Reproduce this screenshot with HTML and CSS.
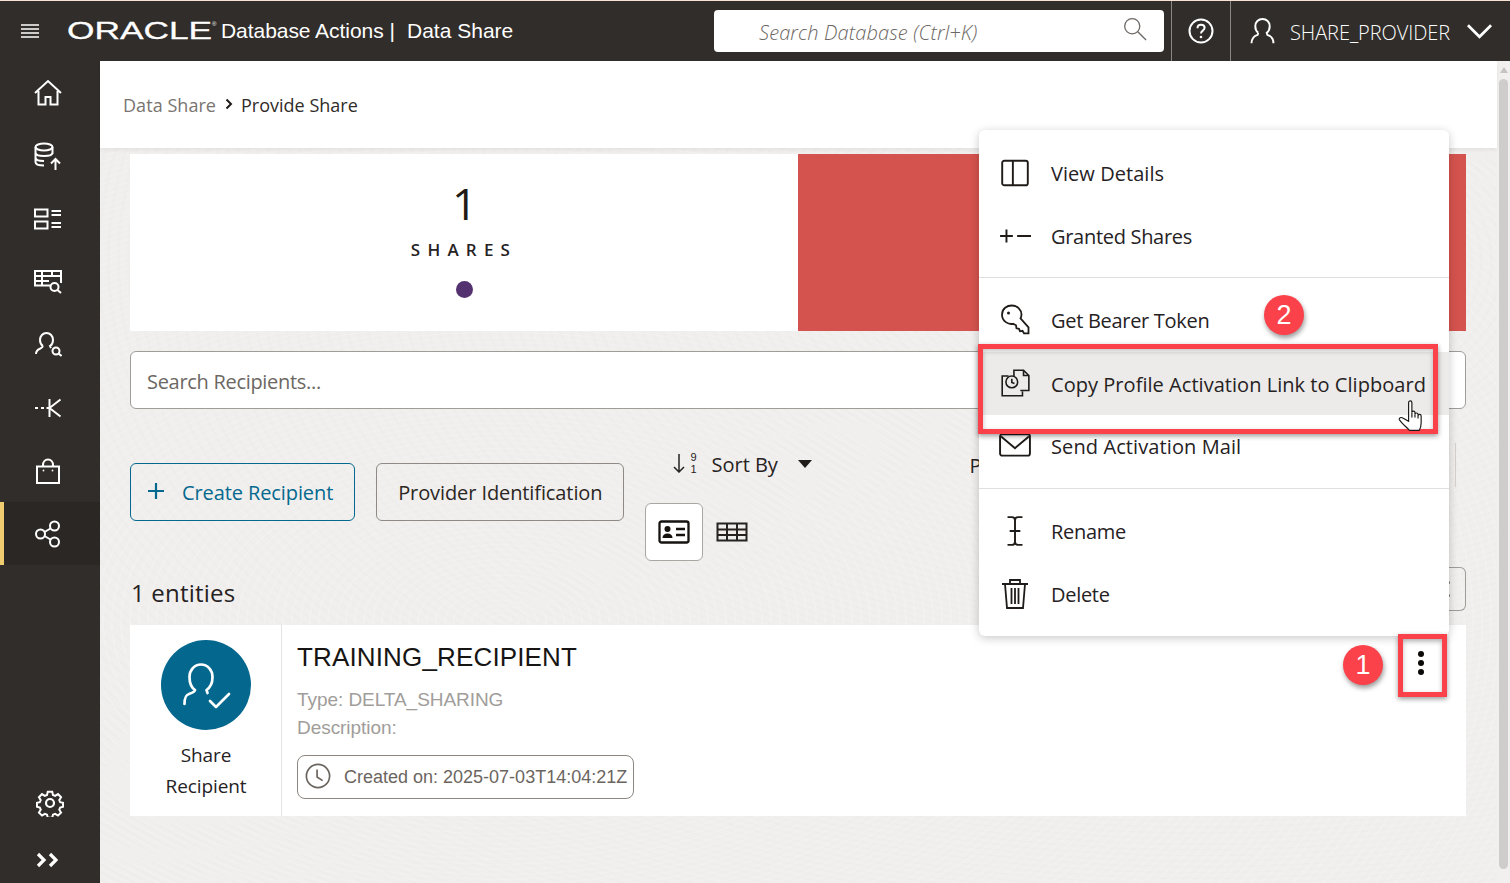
FILE: index.html
```html
<!DOCTYPE html>
<html lang="en">
<head>
<meta charset="utf-8">
<title>Data Share - Provide Share</title>
<link rel="stylesheet" href="styles.css">
</head>
<body>
<header class="topbar">
  <svg class="burger" viewBox="0 0 20 16"><path d="M1 2h18M1 6h18M1 10h18M1 14h18"/></svg>
  <div class="logo"><span class="logo-word">ORACLE</span><span class="logo-reg">®</span></div>
  <span class="app-name">Database Actions |</span>
  <span class="app-page">Data Share</span>
  <div class="global-search">
    <span class="global-placeholder">Search Database (Ctrl+K)</span>
    <svg class="global-glass" viewBox="0 0 26 26"><circle cx="10" cy="10" r="8.2"/><path d="M16 16l9 9"/></svg>
  </div>
  <div class="help-cell"><svg class="help-icon" viewBox="0 0 26 26"><circle cx="13" cy="13" r="11.5"/><path d="M9.5 10.2c0-2.2 1.6-3.4 3.6-3.4s3.5 1.2 3.5 3c0 2.800-3.600 2.800-3.600 5.600"/><circle class="solid" cx="13" cy="19" r="1.300"/></svg></div>
  <div class="user-cell">
    <svg class="user-icon" viewBox="0 0 26 28"><path d="M8.600 15.800C6.500 14.300 5.500 11.700 5.500 9c0-4.400 3.200-7.500 7.500-7.500s7.500 3.100 7.500 7.500c0 2.700-1 5.300-3.100 6.800l.6 2.200c3.500 1 6.400 3 6.400 8.800M8.600 15.800L8 18c-3.500 1-6.400 3-6.400 8.800"/></svg>
    <span class="user-name">SHARE_PROVIDER</span>
    <svg class="user-chevron" viewBox="0 0 28 16"><path d="M2 2l12 12L26 2"/></svg>
  </div>
</header>

<div class="shell">
  <nav class="sidebar">
    <a class="nav-item"><svg viewBox="0 0 28 28"><path d="M1 14L14 2l13 12M4.500 12v13.500h7V18h5v7.500h7V12"/></svg></a>
    <a class="nav-item"><svg viewBox="0 0 28 28"><ellipse cx="10" cy="5" rx="8.500" ry="3.500"/><path d="M1.500 5v15c0 2 3 3.500 8.500 3.500M18.500 5v7M1.500 10.500c0 2 3 3.500 8.500 3.500s8.500-1.500 8.500-3.500M1.500 15.500c0 2 3 3.500 8.500 3.500"/><path d="M21.500 28V17M17 21.500l4.500-4.500 4.500 4.500"/></svg></a>
    <a class="nav-item"><svg viewBox="0 0 28 22"><path d="M1 1.500h12.500v7H1zM1 13.500h12.500v7H1zM17.500 3H27M17.500 7H27M17.500 15H27M17.500 19H27"/></svg></a>
    <a class="nav-item"><svg viewBox="0 0 28 24"><path d="M16 15.500H1V1h26v12M1 6h26M1 11h14M8 1v14.500M18 1v5"/><circle cx="20.500" cy="17" r="4"/><path d="M23.500 20l3.500 3"/></svg></a>
    <a class="nav-item"><svg viewBox="0 0 28 28"><path d="M9 15c-2-1.200-3-3.500-3-6 0-4 2.800-7 6.500-7s6.500 3 6.500 7c0 2.500-1 4.800-3 6l1 2M9 15c-.5 1.500-1.500 2-3 2.800-2.500 1-4 2.500-4 5.200"/><circle cx="22" cy="20" r="3.500"/><path d="M24.500 22.500l3 2.500"/></svg></a>
    <a class="nav-item"><svg viewBox="0 0 28 20"><path d="M1 10h3M7 10h3M12.500 10h2.500M15.500 1v18M15.500 10L26.500 1.500M15.500 10l11 8.500"/></svg></a>
    <a class="nav-item"><svg viewBox="0 0 28 28"><path d="M3 9.500h22v16.500H3zM9 9V8c0-3 2-5.500 5-5.500S19 5 19 8v1"/><circle class="solid" cx="9.500" cy="13.500" r=".9"/><circle class="solid" cx="18.500" cy="13.500" r=".9"/></svg></a>
    <a class="nav-item nav-active"><svg viewBox="0 0 28 28"><circle cx="6.500" cy="14" r="4.500"/><circle cx="20.500" cy="6" r="4.500"/><circle cx="20.500" cy="22" r="4.500"/><path d="M10.500 12l6-3.500M10.500 16l6 3.500"/></svg></a>
    <a class="nav-item nav-gear"><svg viewBox="0 0 28 28"><circle cx="14" cy="14" r="4"/><path d="M11.500 1.500h5l.8 3.600 2.400 1 3.200-2 3.400 3.500-2 3.200 1 2.200 3.200.8v4.400l-3.200.8-1 2.400 2 3.200-3.400 3.400-3.200-2-2.400 1-.8 3.400h-5l-.8-3.400-2.400-1-3.200 2-3.400-3.400 2-3.200-1-2.400-3.200-.8v-4.400l3.200-.8 1-2.200-2-3.200 3.400-3.500 3.200 2 2.400-1z" transform="translate(1.400 1.400) scale(.9)"/></svg></a>
    <a class="nav-item nav-expand"><svg viewBox="0 0 22 16"><path d="M2 2l6 6-6 6M14 2l6 6-6 6"/></svg></a>
  </nav>

  <main class="main">
    <div class="crumbs">
      <span class="crumb-root">Data Share</span>
      <svg class="crumb-sep" viewBox="0 0 8 12"><path d="M1.500 1.500L6 6l-4.500 4.500"/></svg>
      <span class="crumb-page">Provide Share</span>
    </div>

    <div class="content">
      <section class="stats">
        <div class="stat-card">
          <div class="stat-number">1</div>
          <div class="stat-label">SHARES</div>
          <div class="stat-dot"></div>
        </div>
        <div class="stat-red"></div>
      </section>

      <div class="recipient-search">Search Recipients...</div>

      <div class="toolbar">
        <div class="actions">
          <button class="btn btn-primary"><svg class="plus" viewBox="0 0 18 18"><path d="M9 1v16M1 9h16"/></svg>Create Recipient</button>
          <button class="btn">Provider Identification</button>
        </div>
        <div class="sort-col">
          <div class="sort-row">
            <svg class="sort-arrow" viewBox="0 0 12 20"><path d="M6 1v18M1 14l5 5 5-5"/></svg>
            <span class="sort-digits"><span>9</span><span>1</span></span>
            <span class="sort-text">Sort By</span>
            <span class="caret"></span>
          </div>
          <div class="view-row">
            <span class="view-btn"><svg class="card-icon" viewBox="0 0 32 24"><rect x="1.500" y="1.500" width="29" height="21" rx="2"/><circle class="solid" cx="9.500" cy="9" r="3"/><path class="solid" d="M4.500 18c0-3 2-4.500 5-4.500s5 1.500 5 4.500z"/><path d="M18 9h9M18 15h9"/></svg></span>
            <svg class="table-icon" viewBox="0 0 32 20"><path d="M1.500 1.500h29v17h-29zM1.500 7.500h29M1.500 13h29M11 1.500v17M21 1.500v17"/></svg>
          </div>
        </div>
        <div class="filter-label">P</div>
        <div class="filter-box"></div>
      </div>

      <div class="entities-row">
        <span class="entities-count">1 entities</span>
        <span class="entities-btn"><i></i><i></i></span>
      </div>

      <article class="recipient">
        <div class="recipient-side">
          <div class="avatar"><svg viewBox="0 0 50 50"><path d="M14 30C9.500 27 8.500 22 8.500 17 8.500 10 13.500 4.500 20 4.500S31.500 10 31.500 17c0 5-1.500 10-6 13l1 3M14 30c-.5 2-3 3-6 4-3 1-4.500 3-4.500 10"/><path d="M29 41l6 6 13-13"/></svg></div>
          <div class="avatar-label">Share<br>Recipient</div>
        </div>
        <div class="recipient-body">
          <h2 class="recipient-name">TRAINING_RECIPIENT</h2>
          <div class="recipient-meta">Type: DELTA_SHARING</div>
          <div class="recipient-meta">Description:</div>
          <div class="created"><svg viewBox="0 0 28 28"><circle cx="14" cy="14" r="12.500"/><path d="M13 7v8l6 4"/></svg>Created on: 2025-07-03T14:04:21Z</div>
        </div>
        <div class="kebab"><i></i><i></i><i></i></div>
      </article>
    </div>
  </main>

  <div class="scrollbar"><span class="scroll-up"></span><span class="scroll-thumb"></span></div>
</div>

<div class="menu">
  <ul class="menu-group">
    <li class="menu-item menu-item-view"><span class="menu-icon"><svg viewBox="0 0 30 30"><rect x="3" y="3.500" width="24" height="23" rx="2"/><path d="M13 3.500v23"/></svg></span>View Details</li>
    <li class="menu-item"><span class="menu-icon"><svg viewBox="0 0 30 30"><path d="M1 15h12M7 9v12M17 15h13"/></svg></span>Granted Shares</li>
  </ul>
  <ul class="menu-group">
    <li class="menu-item"><span class="menu-icon"><svg viewBox="0 0 30 32"><path d="M12 1.500c5.500 0 9.500 4.500 9.500 9 0 1.500-.5 2.800-1 3.800l8 9v6h-4.500l-1.500-2.500-2.500.5-1-2.500-2.500-.5-.5-3-3-1.500c-4.500 1-11-2.500-11-9S7 1.500 12 1.500z"/><circle class="solid" cx="8.500" cy="9" r="1.500"/></svg></span>Get Bearer Token</li>
    <li class="menu-item menu-hover"><span class="menu-icon"><svg class="copy-icon" viewBox="0 0 30 30"><path d="M9 8.500H3V27h19v-4M14 9V3h9l5 5v14h-8M23 3v5h5"/><circle cx="12" cy="14" r="5.500"/><path d="M12 11v3.500l2.500 1"/></svg></span>Copy Profile Activation Link to Clipboard</li>
    <li class="menu-item menu-item-send"><span class="menu-icon"><svg viewBox="0 0 30 24"><rect x="1" y="1" width="28" height="20" rx="2"/><path d="M2 3l13 11L28 3"/></svg></span>Send Activation Mail</li>
  </ul>
  <ul class="menu-group">
    <li class="menu-item"><span class="menu-icon"><svg viewBox="0 0 20 30"><path d="M3 2h4c2 0 3 1 3 3v20c0 2-1 3-3 3H3M17 2h-4c-2 0-3 1-3 3M17 28h-4c-2 0-3-1-3-3M5 15h10"/></svg></span>Rename</li>
    <li class="menu-item"><span class="menu-icon"><svg viewBox="0 0 30 32"><path d="M2 6h26M10 6V2h10v4M5 6l2 24h16l2-24M11.500 10v16M15 10v16M18.500 10v16"/></svg></span>Delete</li>
  </ul>
</div>

<div class="mark mark-box-one"></div>
<div class="mark mark-box-two"></div>
<div class="mark-num mark-num-one">1</div>
<div class="mark-num mark-num-two">2</div>
<svg class="hand" viewBox="0 0 28 34"><path d="M11 21V3.500a1.700 1.700 0 0 1 3.400 0V14a1.600 1.600 0 0 1 3.200 0v2a1.600 1.600 0 0 1 3.200 0v1.500a1.600 1.600 0 0 1 3.200 0V25c0 3-1 5.500-2 7.500H12C9 29 5 26.500 1.500 21.500c-1-2 2-3 3.500-2l6 3.500z"/><path d="M14.400 14v5M17.600 16v3M20.800 17.500V20"/></svg>
</body>
</html>
```
FILE: styles.css
```css
* { box-sizing: border-box; }
html, body { margin: 0; height: 100%; overflow: hidden; }
body {
  width: 1510px;
  height: 883px;
  position: relative;
  font-family: "Open Sans", "Noto Sans", sans-serif;
  color: #26221f;
  background: #f1efed;
  display: flex;
  flex-direction: column;
}
svg { display: block; fill: none; stroke: currentColor; }
svg .solid { fill: currentColor; stroke: none; }
i { display: block; }

/* top bar */
.topbar {
  flex: 0 0 61px;
  display: flex;
  align-items: center;
  background: #312d2a;
  border-top: 1px solid #f6e3d6;
  color: #fff;
  padding-left: 20px;
}
.burger { width: 20px; height: 16px; stroke-width: 1.300; margin-right: 27px; }
.logo { width: 154px; display: flex; align-items: flex-start; flex: none; height: 24px; position: relative; }
.logo-word {
  font: 400 24px/24px "Liberation Sans", sans-serif;
  -webkit-text-stroke: .3px #fff;
  display: inline-block;
  transform: scaleX(1.47);
  transform-origin: left center;
  width: 103px;
  flex: none;
}
.logo-reg { font: 400 6px/8px "Liberation Sans", sans-serif; margin-left: 42px; margin-top: 1px; }
.app-name { font: 400 21px/24px "Liberation Sans", sans-serif; letter-spacing: -.05px; width: 186px; flex: none; }
.app-page { font: 400 21px/24px "Liberation Sans", sans-serif; }
.global-search {
  margin-left: auto;
  width: 450px;
  height: 42px;
  background: #fff;
  border-radius: 4px;
  display: flex;
  align-items: center;
  justify-content: space-between;
  padding: 0 17px 0 45px;
  color: #6c6763;
}
.global-placeholder { font-size: 20px; font-style: italic; font-weight: 300; letter-spacing: .12px; margin-top: 2px; }
.global-glass { width: 24px; height: 24px; stroke-width: 1.400; margin-top: -4px; }
.help-cell {
  margin-left: 7px;
  width: 60px;
  height: 60px;
  border-left: 1px solid #8b8784;
  border-right: 1px solid #8b8784;
  display: flex;
  align-items: center;
  justify-content: center;
}
.help-icon { width: 26px; height: 26px; stroke-width: 2; }
.user-cell { width: 279px; display: flex; align-items: center; padding-left: 19px; }
.user-icon { width: 25px; height: 28px; stroke-width: 2; }
.user-name { margin: 2px 0 0 15px; font-size: 20px; font-weight: 300; letter-spacing: -.07px; width: 177px; flex: none; }
.user-chevron { width: 27px; height: 16px; stroke-width: 2.800; margin-left: -1px; }

/* frame */
.shell { flex: 1; display: flex; min-height: 0; }
.sidebar {
  flex: 0 0 100px;
  display: flex;
  flex-direction: column;
  background: #312d2a;
  color: #fff;
}
.nav-item { flex: 0 0 63px; display: flex; align-items: center; padding-left: 34px; }
.nav-item svg { width: 28px; height: 28px; stroke-width: 2; }
.nav-active { background: #2a2725; border-left: 4px solid #f0cc71; padding-left: 30px; }
.nav-gear { margin-top: auto; flex-basis: 56px; padding-left: 36px; }
.nav-gear svg { stroke-width: 2.200; }
.nav-expand { flex-basis: 46px; margin-top: 6px; padding-left: 36px; }
.nav-expand svg { width: 22px; height: 16px; stroke-width: 3.200; }

/* main */
.main {
  flex: 1;
  min-width: 0;
  display: flex;
  flex-direction: column;
  background-color: #f1efed;
  background-image:
    repeating-radial-gradient(ellipse at 400px 560px, rgba(255,255,255,.14) 0 2px, transparent 2px 9px),
    repeating-radial-gradient(ellipse at 1100px 200px, rgba(120,110,100,.014) 0 3px, transparent 3px 10px);
}
.crumbs {
  flex: 0 0 87px;
  background: #fff;
  display: flex;
  align-items: center;
  padding: 1px 0 0 23px;
  font-size: 18px;
  box-shadow: 0 2px 4px rgba(0,0,0,.06);
  position: relative;
}
.crumb-root { color: #79746f; letter-spacing: .05px; }
.crumb-sep { width: 8px; height: 12px; stroke-width: 2; margin: 0 8px 3px 9px; color: #1f1b18; }
.crumb-page { color: #302c29; }
.content { padding: 6px 31px 0 30px; display: flex; flex-direction: column; }

.stats { display: flex; height: 177px; }
.stat-card {
  flex: 0 0 668px;
  background: #fff;
  display: flex;
  flex-direction: column;
  align-items: center;
  padding-top: 21px;
}
.stat-number { font-size: 44px; line-height: 56px; font-weight: 400; color: #1f1b18; padding-left: 1px; }
.stat-label { font-size: 17px; line-height: 23px; font-weight: 600; letter-spacing: 7.200px; margin-top: 7px; }
.stat-dot { width: 17px; height: 17px; border-radius: 50%; background: #54316f; margin-top: 20px; }
.stat-red { flex: 1; background: #d5534e; }

.recipient-search {
  margin-top: 20px;
  height: 58px;
  background: #fff;
  border: 1px solid #a09c98;
  border-radius: 6px;
  display: flex;
  align-items: center;
  padding: 2px 0 0 16px;
  font-size: 20px;
  color: #6c6763;
  letter-spacing: -.3px;
}

.toolbar { display: flex; margin-top: 34px; height: 118px; }
.actions { display: flex; align-items: flex-start; gap: 21px; padding-top: 20px; }
.btn {
  height: 58px;
  padding: 0 21px;
  display: flex;
  align-items: center;
  background: transparent;
  border: 1px solid #8f8a85;
  border-radius: 6px;
  font: 400 20px "Open Sans", "Noto Sans", sans-serif;
  letter-spacing: -.1px;
  color: #2b2724;
}
.btn-primary { border-color: #04698f; color: #04698f; padding: 0 21px 0 16px; }
.plus { width: 18px; height: 18px; stroke-width: 2.200; margin-right: 17px; margin-top: -3px; }
.sort-col { width: 324px; margin-left: 21px; display: flex; flex-direction: column; }
.sort-row { height: 60px; display: flex; align-items: flex-start; padding: 10px 0 0 28px; }
.sort-arrow { width: 12px; height: 20px; stroke-width: 1.500; }
.sort-digits { display: flex; flex-direction: column; font: 400 11px/12px "Liberation Sans", sans-serif; margin: -2px 0 0 5px; width: 7px; }
.sort-text { margin-left: 14px; font-size: 20px; line-height: 24px; }
.caret { width: 0; height: 0; margin: 7px 0 0 20px; border-left: 7.500px solid transparent; border-right: 7.500px solid transparent; border-top: 8px solid #1f1b18; }
.view-row { display: flex; align-items: center; }
.view-btn { width: 58px; height: 58px; background: #fff; border: 1px solid #aaa6a2; border-radius: 6px; display: flex; align-items: center; justify-content: center; }
.card-icon { width: 32px; height: 24px; stroke-width: 2.300; color: #151210; }
.table-icon { width: 32px; height: 20px; stroke-width: 2; margin-left: 13px; color: #26221f; }
.filter-label { font-size: 20px; line-height: 24px; padding-top: 11px; width: 20px; }
.filter-box { flex: 1; height: 44px; border-right: 1px solid #d5d2cf; margin-right: 10px; }

.entities-row { display: flex; align-items: flex-start; justify-content: space-between; margin-top: 6px; height: 58px; }
.entities-count { font-size: 24px; line-height: 40px; padding: 6px 0 0 1px; letter-spacing: .2px; }
.entities-btn { width: 70px; height: 44px; border: 1px solid #a09c98; border-radius: 0 6px 6px 0; border-left: 0; display: flex; flex-direction: column; align-items: flex-end; justify-content: center; gap: 10px; padding-right: 15px; }
.entities-btn i { width: 3px; height: 3px; border-radius: 50%; background: #6c6763; }

.recipient { display: flex; height: 191px; background: #fff; }
.recipient-side { flex: 0 0 152px; border-right: 1px solid #e5e3e1; display: flex; flex-direction: column; align-items: center; padding-top: 15px; }
.avatar { width: 90px; height: 90px; border-radius: 50%; background: #04678e; color: #fff; display: flex; align-items: center; justify-content: center; }
.avatar svg { width: 50px; height: 50px; stroke-width: 2.700; stroke-linecap: round; stroke-linejoin: round; }
.avatar-label { font-size: 19px; line-height: 31px; text-align: center; margin-top: 9.500px; letter-spacing: -.1px; color: #26221f; padding-left: 1px; }
.recipient-body { flex: 1; padding: 14px 0 0 15px; font-family: "Liberation Sans", sans-serif; }
.recipient-name { margin: 0; font: 400 26px/36px "Liberation Sans", sans-serif; letter-spacing: .15px; color: #161513; }
.recipient-meta { font-size: 19px; line-height: 28px; letter-spacing: -.05px; color: #a09d9a; }
.recipient-name + .recipient-meta { margin-top: 11px; }
.created {
  margin-top: 13px;
  width: 337px;
  height: 44px;
  border: 1px solid #8c8782;
  border-radius: 8px;
  display: flex;
  align-items: center;
  padding-left: 7px;
  font-size: 18px;
  color: #6b6560;
  white-space: nowrap;
}
.created svg { width: 26px; height: 26px; stroke-width: 1.800; margin: -2px 13px 0 0; }
.kebab { flex: 0 0 90px; padding: 26px 0 0 0; display: flex; flex-direction: column; align-items: flex-start; gap: 3px; }
.kebab i { width: 6px; height: 6px; border-radius: 50%; background: #0c0a09; margin-left: 42px; }

.scrollbar { flex: 0 0 13px; background: #f1f0ef; display: flex; flex-direction: column; align-items: center; padding-top: 6px; }
.scroll-up { width: 0; height: 0; border-left: 4px solid transparent; border-right: 4px solid transparent; border-bottom: 6px solid #c6c4c2; }
.scroll-thumb { width: 9px; height: 790px; margin-top: 6px; background: #cfcdcb; border-radius: 5px; }

/* context menu */
.menu {
  position: absolute;
  left: 979px;
  top: 130px;
  width: 470px;
  height: 506px;
  background: #fff;
  border-radius: 6px;
  box-shadow: 0 2px 10px rgba(0,0,0,.22);
  padding: 12px 0 10px;
}
.menu-group { list-style: none; margin: 0; padding: 0; }
.menu-group + .menu-group { margin-top: 9px; padding-top: 11px; border-top: 1px solid #e1dfdd; }
.menu-group + .menu-group + .menu-group { margin-top: 10px; }
.menu-item { height: 63px; display: flex; align-items: center; font-size: 20px; letter-spacing: -.3px; color: #26221f; white-space: nowrap; padding-bottom: 1px; }
.menu-item-view { letter-spacing: .05px; }
.menu-item-send { letter-spacing: .1px; }
.menu-hover { background: #ecebe9; letter-spacing: .04px; padding: 1px 0 0; }
.menu-icon { width: 72px; flex: none; display: flex; justify-content: center; padding-right: 1px; letter-spacing: 0; }
.menu-icon svg { width: 32px; height: 32px; stroke-width: 1.800; color: #1f1b18; }
.menu-icon .copy-icon { stroke-width: 1.500; margin-top: -3px; }

/* annotations */
.mark { position: absolute; border: 5px solid #fb4149; box-shadow: 0 2px 5px rgba(0,0,0,.4), inset 0 2px 5px rgba(0,0,0,.25); }
.mark-box-one { left: 1398px; top: 634px; width: 49px; height: 63px; }
.mark-box-two { left: 978px; top: 344px; width: 460px; height: 90px; }
.mark-num {
  position: absolute;
  width: 40px;
  height: 40px;
  border-radius: 50%;
  background: #fb4149;
  color: #fff;
  display: flex;
  align-items: center;
  justify-content: center;
  font: 400 27px "Liberation Sans", sans-serif;
  box-shadow: 1px 3px 5px rgba(0,0,0,.4);
}
.mark-num-one { left: 1343px; top: 645px; }
.mark-num-two { left: 1264px; top: 295px; }
.hand { position: absolute; left: 1398px; top: 399px; width: 27px; height: 33px; fill: #fff; stroke: #1a1816; stroke-width: 1.200; }
```
